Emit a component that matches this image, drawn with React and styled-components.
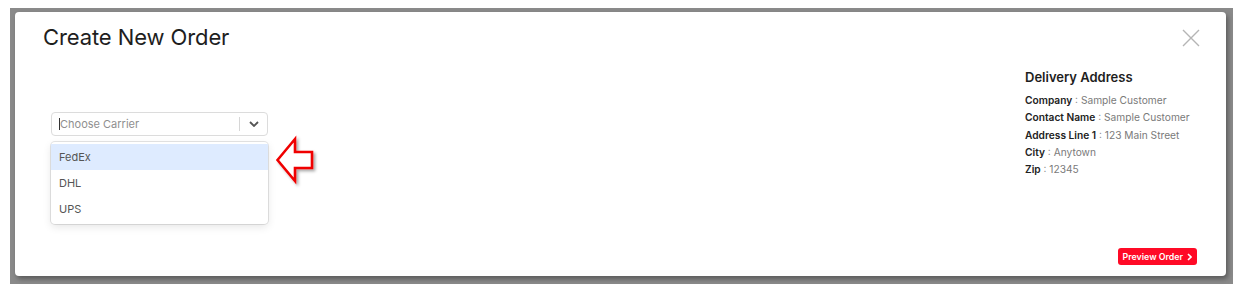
import React from 'react';
import styled, { createGlobalStyle } from 'styled-components';

const GlobalStyle = createGlobalStyle`
  html, body {
    margin: 0;
    padding: 0;
    background: #ffffff;
  }
  body {
    font-family: Inter, "Noto Sans", sans-serif;
    width: 1246px;
    height: 292px;
    overflow: hidden;
  }
`;

const Page = styled.div`
  width: 1246px;
  height: 292px;
  padding: 8px 13px 8px 10px;
  box-sizing: border-box;
`;

const Backdrop = styled.div`
  height: 100%;
  background: #8a8a8a;
  padding: 4px 7px 8px 5px;
  box-sizing: border-box;
`;

const Modal = styled.div`
  position: relative;
  height: 100%;
  background: #ffffff;
  border-radius: 4px;
  box-shadow: 2px 3px 5px rgba(0, 0, 0, 0.35);
  display: flex;
  flex-direction: column;
  padding: 11px 26px 11px 28px;
  box-sizing: border-box;
`;

const Header = styled.div`
  display: flex;
  justify-content: space-between;
  align-items: flex-start;
`;

const Title = styled.h2`
  margin: 0;
  font-size: 22px;
  line-height: 28px;
  font-weight: 400;
  color: #1e1e1e;
  letter-spacing: -0.1px;
`;

const CloseButton = styled.button`
  border: none;
  background: none;
  padding: 0;
  margin-top: 6px;
  width: 18px;
  height: 18px;
  cursor: pointer;
  display: flex;
`;

const Body = styled.div`
  display: flex;
  justify-content: space-between;
  align-items: flex-start;
`;

const SelectArea = styled.div`
  position: relative;
  margin: 61px 0 0 8px;
  width: 217px;
`;

const SelectControl = styled.div`
  height: 24px;
  border: 1px solid #dcdcdc;
  border-radius: 4px;
  box-sizing: border-box;
  display: flex;
  align-items: center;
  padding-left: 7px;
`;

const Caret = styled.span`
  width: 1px;
  height: 12px;
  background: #333;
`;

const Placeholder = styled.span`
  flex: 1;
  font-size: 11px;
  color: #8f8f8f;
`;

const Separator = styled.span`
  width: 1px;
  height: 14px;
  background: #d6d6d6;
`;

const Indicator = styled.span`
  width: 27px;
  display: flex;
  justify-content: center;
  align-items: center;
`;

const Menu = styled.ul`
  position: absolute;
  top: 30px;
  left: 0;
  width: 100%;
  margin: 0;
  padding: 2px 0;
  list-style: none;
  background: #ffffff;
  border-radius: 4px;
  box-shadow: 0 0 0 1px rgba(0, 0, 0, 0.1), 0 3px 8px rgba(0, 0, 0, 0.1);
  box-sizing: border-box;
`;

const Option = styled.li`
  height: 26px;
  display: flex;
  align-items: center;
  padding-left: 8px;
  font-size: 11px;
  color: #555;
  background: ${({ active }) => (active ? '#deebff' : 'transparent')};
`;

const Pointer = styled.svg`
  position: absolute;
  top: 25px;
  left: calc(100% + 8px);
  overflow: visible;
`;

const Address = styled.div`
  width: 175px;
  margin-top: 18px;
`;

const AddressTitle = styled.h3`
  margin: 0 0 7px;
  font-size: 13px;
  line-height: 16px;
  font-weight: 600;
  color: #1e1e1e;
`;

const AddressRow = styled.div`
  font-size: 10.2px;
  line-height: 17.3px;
  color: #7a7a7a;
  white-space: nowrap;

  b {
    font-weight: 600;
    color: #222;
  }
`;

const Footer = styled.div`
  margin-top: auto;
  display: flex;
  justify-content: flex-end;
  padding-right: 3px;
`;

const PreviewButton = styled.button`
  height: 17px;
  border: none;
  border-radius: 3px;
  background: #ff0a26;
  color: #ffffff;
  font-family: Inter, "Noto Sans", sans-serif;
  font-size: 8.8px;
  font-weight: 600;
  padding: 0 5px;
  display: flex;
  align-items: center;
  gap: 4px;
  cursor: pointer;
`;

const carriers = ['FedEx', 'DHL', 'UPS'];

const address = [
  ['Company', 'Sample Customer'],
  ['Contact Name', 'Sample Customer'],
  ['Address Line 1', '123 Main Street'],
  ['City', 'Anytown'],
  ['Zip', '12345'],
];

export default function App() {
  return (
    <>
      <GlobalStyle />
      <Page>
        <Backdrop>
          <Modal>
            <Header>
              <Title>Create New Order</Title>
              <CloseButton aria-label="Close">
                <svg width="18" height="18" viewBox="0 0 18 18">
                  <path d="M1 1 L17 17 M17 1 L1 17" stroke="#b5b5b5" strokeWidth="1.4" />
                </svg>
              </CloseButton>
            </Header>
            <Body>
              <SelectArea>
                <SelectControl>
                  <Caret />
                  <Placeholder>Choose Carrier</Placeholder>
                  <Separator />
                  <Indicator>
                    <svg width="10" height="6" viewBox="0 0 10 6">
                      <path d="M1 1 L5 5 L9 1" stroke="#555" strokeWidth="1.8" fill="none" />
                    </svg>
                  </Indicator>
                </SelectControl>
                <Menu>
                  {carriers.map((c, i) => (
                    <Option key={c} active={i === 0}>{c}</Option>
                  ))}
                </Menu>
                <Pointer width="40" height="46" viewBox="0 0 40 46">
                  <defs>
                    <filter id="shadow" x="-30%" y="-30%" width="160%" height="160%">
                      <feDropShadow dx="2" dy="2" stdDeviation="1.5" floodColor="#000" floodOpacity="0.35" />
                    </filter>
                  </defs>
                  <path
                    d="M1.5 23 L19 2 L19 15 L36 15 L36 31 L19 31 L19 44 Z"
                    fill="#ffffff"
                    stroke="#f00000"
                    strokeWidth="2.6"
                    strokeLinejoin="miter"
                    filter="url(#shadow)"
                  />
                </Pointer>
              </SelectArea>
              <Address>
                <AddressTitle>Delivery Address</AddressTitle>
                {address.map(([label, value]) => (
                  <AddressRow key={label}>
                    <b>{label}</b> : {value}
                  </AddressRow>
                ))}
              </Address>
            </Body>
            <Footer>
              <PreviewButton>
                Preview Order
                <svg width="5" height="8" viewBox="0 0 5 8">
                  <path d="M1 1 L4 4 L1 7" stroke="#fff" strokeWidth="1.6" fill="none" />
                </svg>
              </PreviewButton>
            </Footer>
          </Modal>
        </Backdrop>
      </Page>
    </>
  );
}
